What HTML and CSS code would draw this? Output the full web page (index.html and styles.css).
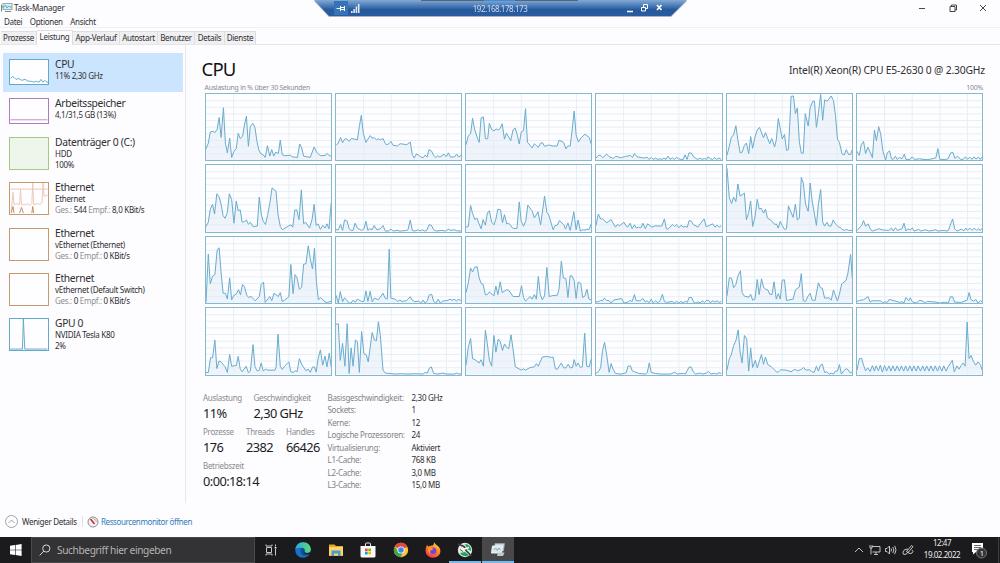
FILE: index.html
```html
<!DOCTYPE html>
<html lang="de">
<head>
    <meta charset="UTF-8">
    <meta name="viewport" content="width=device-width, initial-scale=1.0">
    <title>Task-Manager</title>
    <link rel="stylesheet" href="styles.css">
</head>
<body>
    <div class="window">
        <header class="titlebar">
            <svg class="app-icon" viewBox="0 0 12 11"><rect x="2" y="1.500" width="9" height="6" fill="#d9eef6" stroke="#8a979e" stroke-width=".8"/><path d="M1 5h2l1.500-2L6 6l1.500-2L9 5h2" fill="none" stroke="#3f9dbd" stroke-width=".8"/><path d="M.5 2.500v7M4 9.500h6" stroke="#6f8b7a" stroke-width="1"/></svg>
            <span class="title">Task-Manager</span>
            <div class="window-buttons">
                <svg viewBox="0 0 10 10"><path d="M2 5.500h6"/></svg>
                <svg viewBox="0 0 10 10"><path d="M2 3.500h5v5h-5zM3.500 3.500v-1.500h5v5h-1.500"/></svg>
                <svg viewBox="0 0 10 10"><path d="M2 2l6 6M8 2l-6 6"/></svg>
            </div>
        </header>
        <nav class="menu">
            <span>Datei</span>
            <span>Optionen</span>
            <span>Ansicht</span>
        </nav>
        <div class="tabs">
            <span class="tab tab-prozesse">Prozesse</span>
            <span class="tab tab-leistung active">Leistung</span>
            <span class="tab tab-verlauf">App-Verlauf</span>
            <span class="tab tab-autostart">Autostart</span>
            <span class="tab tab-benutzer">Benutzer</span>
            <span class="tab tab-details">Details</span>
            <span class="tab tab-dienste">Dienste</span>
        </div>

        <main class="content">
            <aside class="sidebar">
                <div class="item short selected">
                    <svg class="thumb blue" viewBox="0 0 40 26"><path d="M0 20l2-2 2 1 2 2 3-1 3 2 4-1 3 2 3 0 3 1 3-1 3 1 2-3 2 3 2-2 2 2 3 0"/></svg>
                    <div class="item-text"><h3>CPU</h3><p>11% 2,30 GHz</p></div>
                </div>
                <div class="item short">
                    <svg class="thumb purple" viewBox="0 0 40 26"><path d="M0 22.500h40"/></svg>
                    <div class="item-text"><h3>Arbeitsspeicher</h3><p>4,1/31,5 GB (13%)</p></div>
                </div>
                <div class="item">
                    <svg class="thumb green" viewBox="0 0 40 33"></svg>
                    <div class="item-text"><h3>Datenträger 0 (C:)</h3><p>HDD</p><p>100%</p></div>
                </div>
                <div class="item">
                    <svg class="thumb orange" viewBox="0 0 40 33"><path class="light" d="M0 6.500h40"/><path class="light" d="M1 30l2-20 1 13 4-1 2 1 1-16 1 16 4 0 3-1 2 2 2-2 1-22 1 23 5-1 2 1 2-3 1-20 1 14 4-1"/><path d="M1 32l2-7 1 7M10 32l2-6 2 6M23 32l1-7 1 7"/></svg>
                    <div class="item-text"><h3>Ethernet</h3><p>Ethernet</p><p><i>Ges.:</i> 544 <i>Empf.:</i> 8,0 KBit/s</p></div>
                </div>
                <div class="item">
                    <svg class="thumb orange" viewBox="0 0 40 33"></svg>
                    <div class="item-text"><h3>Ethernet</h3><p>vEthernet (Ethernet)</p><p><i>Ges.:</i> 0 <i>Empf.:</i> 0 KBit/s</p></div>
                </div>
                <div class="item">
                    <svg class="thumb orange" viewBox="0 0 40 33"></svg>
                    <div class="item-text"><h3>Ethernet</h3><p>vEthernet (Default Switch)</p><p><i>Ges.:</i> 0 <i>Empf.:</i> 0 KBit/s</p></div>
                </div>
                <div class="item">
                    <svg class="thumb blue" viewBox="0 0 40 33"><path d="M0 32h13l1-32 1.500 32h24"/></svg>
                    <div class="item-text"><h3>GPU 0</h3><p>NVIDIA Tesla K80</p><p>2%</p></div>
                </div>
            </aside>

            <section class="details">
                <div class="heading">
                    <h1>CPU</h1>
                    <span class="model">Intel(R) Xeon(R) CPU E5-2630 0 @ 2.30GHz</span>
                </div>
                <div class="caption">
                    <span>Auslastung in % über 30 Sekunden</span>
                    <span class="percent">100%</span>
                </div>
                <div class="cores" id="cores"></div>

                <div class="stats">
                    <div class="live">
                        <div class="live-row">
                            <div class="w50"><label>Auslastung</label><b>11%</b></div>
                            <div><label>Geschwindigkeit</label><b>2,30 GHz</b></div>
                        </div>
                        <div class="live-row">
                            <div class="w43"><label>Prozesse</label><b>176</b></div>
                            <div class="w40"><label>Threads</label><b>2382</b></div>
                            <div><label>Handles</label><b>66426</b></div>
                        </div>
                        <div class="live-row">
                            <div><label>Betriebszeit</label><b>0:00:18:14</b></div>
                        </div>
                    </div>
                    <dl class="facts">
                        <dt>Basisgeschwindigkeit:</dt><dd>2,30 GHz</dd>
                        <dt>Sockets:</dt><dd>1</dd>
                        <dt>Kerne:</dt><dd>12</dd>
                        <dt>Logische Prozessoren:</dt><dd>24</dd>
                        <dt>Virtualisierung:</dt><dd>Aktiviert</dd>
                        <dt>L1-Cache:</dt><dd>768 KB</dd>
                        <dt>L2-Cache:</dt><dd>3,0 MB</dd>
                        <dt>L3-Cache:</dt><dd>15,0 MB</dd>
                    </dl>
                </div>
            </section>
        </main>

        <footer class="statusbar">
            <svg class="less" viewBox="0 0 13 13"><circle cx="6.500" cy="6.500" r="6"/><path d="M3.500 8l3-3 3 3"/></svg>
            <span class="less-text">Weniger Details</span>
            <svg class="resmon" viewBox="0 0 12 12"><circle cx="6" cy="6" r="5" fill="#f4f2f3" stroke="#8b8b8f" stroke-width="1"/><path d="M3.500 3l4 5" stroke="#cf2f35" stroke-width="1.700"/><path d="M6 2.500q3 .5 3.500 3.500" fill="none" stroke="#999" stroke-width=".7"/></svg>
            <a class="resmon-link">Ressourcenmonitor öffnen</a>
        </footer>
    </div>

    <!-- remote desktop connection bar -->
    <div class="rdp">
        <div class="rdp-shape">
            <div class="rdp-strip"></div>
            <svg class="rdp-pin" viewBox="0 0 14 14"><path d="M2.500 7.500h4" stroke="#fff"/><path d="M6.500 5v5M7 6.500h3M7 8.500h3M10.500 5v5" stroke="#fff"/></svg>
            <svg class="rdp-signal" viewBox="0 0 9 9"><path d="M0 9v-2h1.600v2zM2.300 9v-4h1.600v4zM4.600 9v-6.500h1.600v6.500zM6.900 9v-9h1.600v9z" fill="#dfe9f4"/></svg>
            <span class="rdp-address">192.168.178.173</span>
            <svg class="rdp-buttons" viewBox="0 0 38 10"><path d="M1 8.500h6" stroke="#fff" stroke-width="1.600"/><path d="M15.500 4.500h4v3.500h-4zM17.500 4v-2.500h4v4h-2" fill="none" stroke="#fff"/><path d="M31 2l4.500 5M35.500 2l-4.500 5" stroke="#fff" stroke-width="1.600"/></svg>
        </div>
    </div>

    <div class="taskbar">
        <div class="start"><svg viewBox="0 0 12 12"><path d="M0 1.700l5-.7v4.700h-5zM5.600.9l6-.9v5.700h-6zM0 6.300h5v4.700l-5-.7zM5.600 6.300h6v5.700l-6-.9z" fill="#fff"/></svg></div>
        <div class="search">
            <svg viewBox="0 0 12 12"><circle cx="7.300" cy="4.500" r="3.600"/><path d="M4.700 7.200l-4 4.200"/></svg>
            <span>Suchbegriff hier eingeben</span>
        </div>
        <div class="apps">
            <div class="app"><svg viewBox="0 0 16 16"><path d="M3 2.500v1.500h6v-1.500M3 13.500v-1.500h6v1.500M3.500 5.500h5v5h-5zM12.500 2.500v2M12.500 7v6.500" fill="none" stroke="#c8c8c8" stroke-width="1"/><path d="M11.700 5h1.700v1.500h-1.700z" fill="#fff"/></svg></div>
            <div class="app"><svg viewBox="0 0 16 16">
                <defs><linearGradient id="edge" x1="0" y1="0" x2="1" y2="0"><stop offset="0" stop-color="#2aa7e4"/><stop offset="1" stop-color="#5cdb78"/></linearGradient></defs>
                <circle cx="8" cy="8" r="7.800" fill="#1671c8"/><path d="M.4 7.300C1 3 4 .2 8 .2c5 0 7.800 3.500 7.800 7 0 2.300-1.800 3.800-4 3.800-2 0-2.800-.8-2.300-1.700.8-1.500-.3-3.500-3-3.500-3 0-4.900.3-6.100 1.500z" fill="url(#edge)"/><path d="M5.500 8.500c0-1.500 1-2.500 2-2.500 1.500 0 2.500 1.500 2 2.800-.6 1.300.3 2.300 2.300 2.300 1.500 0 2.300-.3 3-.6-1 2-3 3.500-5 3.500-2.800 0-4.300-2.800-4.300-5.500z" fill="#14508e"/><path d="M9.500 8.800c-.6 1.300.3 2.300 2.300 2.300 1.500 0 2.500-.4 3.500-1.100l.7 1.500-2 1c-3 .2-5.500-1-5.500-3z" fill="#1f1e20"/></svg></div>
            <div class="app"><svg viewBox="0 0 16 16"><path d="M1 2.500h5.500l1.500 1.500h7v10h-14z" fill="#e6a82c"/><path d="M1 5h14v8.500h-14z" fill="#fbd667"/><path d="M3.500 14v-5.500h9v5.500h-2.500v-2.500h-4v2.500z" fill="#4a9ad4"/></svg></div>
            <div class="app"><svg viewBox="0 0 16 16"><path d="M5.500 4.500v-2.500q0-1 1-1h3q1 0 1 1v2.500" fill="none" stroke="#e8e8e8"/><path d="M.5 4h15v10q0 1.500-1.500 1.500h-12q-1.500 0-1.500-1.500z" fill="#f8f8f8"/><path d="M5 6.500h2.700v2.700H5z" fill="#f25022"/><path d="M8.300 6.500H11v2.700H8.300z" fill="#7fba00"/><path d="M5 9.800h2.700v2.700H5z" fill="#00a4ef"/><path d="M8.300 9.800H11v2.700H8.300z" fill="#ffb900"/></svg></div>
            <div class="app"><svg viewBox="0 0 16 16"><circle cx="8" cy="8" r="7.200" fill="#f9c83a"/><path d="M8 8L1.700 4.500A7.200 7.200 0 0 1 14.400 4.700z" fill="#dd4a3e"/><path d="M1.700 4.500A7.200 7.200 0 0 0 7.500 15.200L10 10 5 9.500z" fill="#3da452"/><circle cx="8" cy="8" r="3.600" fill="#fff"/><circle cx="8" cy="8" r="2.800" fill="#4285e8"/></svg></div>
            <div class="app"><svg viewBox="0 0 16 16">
                <defs><linearGradient id="fox" x1=".8" y1="0" x2=".2" y2="1"><stop offset="0" stop-color="#ffdc3e"/><stop offset=".5" stop-color="#fd7b27"/><stop offset="1" stop-color="#ee2f62"/></linearGradient></defs>
                <path d="M2 3l1.500 1.500C5 3.500 6.500 3.500 8 3.500L9.500.3c.5 2 2 2.500 3 3.500 1.700 1.300 2.900 3 2.900 5.200 0 4-3.300 6.700-7.400 6.700S.6 12.800.6 9C.6 6.500 1 5 2 3z" fill="url(#fox)"/><circle cx="8" cy="8.800" r="3.300" fill="#7a43d3"/><path d="M3.500 5.500c2-.5 3 .5 5 1.500-1 1-2.500.7-3.200 2-.5 1-.1 2 .7 3-2.500-.7-3.800-3.500-2.500-6.500z" fill="#ff9a2a"/></svg></div>
            <div class="app running"><svg viewBox="0 0 16 16"><circle cx="8" cy="8" r="7.200" fill="#dfe9df"/><path d="M8 2a6 6 0 0 1 6 7l-4-2zM3 11l5-1 4 3a6 6 0 0 1-9-2z" fill="#25a25a"/><path d="M1 2l6 2.500L9.500 9l5 5" fill="none" stroke="#3b3f3e" stroke-width="1.600"/><path d="M3 8.500l9-3" stroke="#fff" stroke-width="1.700"/><path d="M3 7.500l3 2" stroke="#55615a"/></svg></div>
            <div class="app running current"><svg viewBox="0 0 16 16"><path d="M5 1.500h9.500l-1 7.500h-9z" fill="#cfd6da" stroke="#9aa3a8" stroke-width=".7"/><path d="M2.500 4h10l-1 7h-10z" fill="#dbe5ea" stroke="#f2f5f6"/><path d="M4 8l1.700-2 1.600 2.500 1.700-2.500 1.500 2" fill="none" stroke="#5aa5c8" stroke-width=".8"/><path d="M8 10.500h6.500l-1.500 3.500h-6z" fill="#c4c8ca"/></svg></div>
        </div>
        <div class="tray">
            <svg class="tray-icon chevron" viewBox="0 0 12 12"><path d="M2 8l4-4 4 4"/></svg>
            <svg class="tray-icon" viewBox="0 0 12 12"><path d="M3 2.500h8v5.500h-7.500M1 1v3h2v-3M2 4v6.500M5 10.500h4M7 8v2"/></svg>
            <svg class="tray-icon" viewBox="0 0 12 12"><path d="M.5 4.500h1.500l2.500-2.500v8l-2.500-2.500h-1.500z"/><path d="M6 4.500q1 1.500 0 3M7.800 3q2 3 0 6M9.700 1.800q2.600 4.200 0 8.400"/></svg>
            <svg class="tray-icon pen" viewBox="0 0 12 12"><path d="M4.500 7.500l5-6 1.500 1.200-5 6zM6 5q-4.500 0-5 3t2 2.500 3-3M6 8.500q2 2 4 .5t0-3"/></svg>
            <div class="clock"><span>12:47</span><span class="date">19.02.2022</span></div>
            <svg class="notify" viewBox="0 0 18 18"><path d="M2 2h11v9h-7l-3 2.500v-2.500h-1z" fill="#fff"/><path d="M4 4.500h7M4 6.500h7M4 8.500h5" stroke="#444" stroke-width=".8"/><circle cx="11.500" cy="12" r="5" fill="#343437" stroke="#77777a"/><text x="9.800" y="14.800">1</text></svg>
        </div>
    </div>
    <script src="cores.js"></script>
</body>
</html>
```

FILE: styles.css
```css
* {
    box-sizing: border-box;
}
body {
    margin: 0;
    width: 1000px;
    height: 563px;
    overflow: hidden;
    position: relative;
    font-family: "Noto Sans", "Open Sans", sans-serif;
    font-size: 8px;
    letter-spacing: -0.3px;
    color: #2f2f32;
    background-color: #fdfcfe;
}
h1, h3, p, dl, dd {
    margin: 0;
    font-weight: normal;
}
svg {
    display: block;
    flex: none;
}
.window {
    height: 537px;
    display: flex;
    flex-direction: column;
}

/* title, menu, tabs */
.titlebar {
    height: 15px;
    display: flex;
    align-items: center;
    padding-left: 1px;
}
.app-icon {
    width: 12px;
    height: 11px;
    margin-right: 1px;
}
.title {
    letter-spacing: -0.2px;
}
.window-buttons {
    margin-left: auto;
    display: flex;
    gap: 20.5px;
    padding-right: 12px;
}
.window-buttons svg {
    width: 10px;
    height: 10px;
    fill: none;
    stroke: #333;
    stroke-width: 0.9;
}
.menu {
    height: 13px;
    display: flex;
    align-items: center;
    gap: 7.5px;
    padding-left: 4px;
    border-bottom: 1px solid #f0eff1;
}
.tabs {
    height: 17px;
    display: flex;
    align-items: flex-end;
    padding-left: 1px;
    border-bottom: 1px solid #e6e5e7;
}
.tab {
    height: 13px;
    line-height: 12px;
    text-align: center;
    white-space: nowrap;
    background-color: #f0eff1;
    border: 1px solid #dedde0;
    border-left: none;
    border-bottom: none;
}
.tab.active {
    height: 15px;
    margin-bottom: -1px;
    background-color: #fdfcfe;
}
.tab-prozesse { width: 36px; }
.tab-leistung { width: 36px; }
.tab-verlauf { width: 47px; }
.tab-autostart { width: 38px; }
.tab-benutzer { width: 37px; }
.tab-details { width: 30px; }
.tab-dienste { width: 31px; }

.content {
    flex: 1;
    display: flex;
    min-height: 0;
}

/* sidebar */
.sidebar {
    width: 186px;
    margin-bottom: 3px;
    padding: 8px 2px 0 3px;
    border-right: 1px solid #e8e7ea;
}
.item {
    height: 45.3px;
    display: flex;
    padding: 6px 0 0 6px;
}
.item.short {
    height: 39px;
}
.item.selected {
    background-color: #cce5fe;
}
.thumb {
    width: 40px;
    height: 33px;
    border: 1px solid;
    background-color: #fefdff;
    fill: none;
    stroke-width: 1;
}
.short .thumb {
    height: 26px;
}
.blue { border-color: #66a8c8; stroke: #5fa6c9; }
.purple { border-color: #b07cbc; stroke: #b98cc4; }
.green { border-color: #a3cb80; background-color: #eef5ea; }
.orange { border-color: #c79a6c; stroke: #c58a5c; }
.thumb .light { stroke: #eac8b8; }
.item-text {
    padding-left: 6px;
}
.item-text h3 {
    font-size: 10.3px;
    letter-spacing: -0.33px;
    line-height: 12px;
    margin-top: -1px;
    white-space: nowrap;
}
.item-text p {
    line-height: 11px;
    white-space: nowrap;
}
.item-text i {
    font-style: normal;
    color: #909094;
}

/* CPU details */
.details {
    flex: 1;
    padding: 12px 17px 0 18.5px;
}
.heading {
    height: 26px;
    display: flex;
    justify-content: space-between;
}
.heading h1 {
    margin-left: -3px;
    font-size: 18.5px;
    letter-spacing: -0.8px;
    line-height: 23px;
    color: #111;
}
.model {
    margin: 5px -2px 0 0;
    font-size: 10.3px;
    letter-spacing: -0.15px;
    line-height: 17px;
}
.caption {
    height: 10px;
    display: flex;
    justify-content: space-between;
    line-height: 10px;
    font-size: 6.9px;
    letter-spacing: -0.21px;
    color: #8b8b8f;
}
.cores {
    height: 282.500px;
    display: grid;
    grid-template-columns: repeat(6, 1fr);
    grid-template-rows: repeat(4, 1fr);
    gap: 3px;
}
.core {
    width: 100%;
    height: 100%;
    border: 1px solid #86b8d0;
    background-color: #fefdff;
}
.core .grid {
    fill: none;
    stroke: #e6f0f4;
    stroke-width: 1;
    vector-effect: non-scaling-stroke;
}
.core .area {
    fill: #e4ecf7;
    fill-opacity: 0.6;
}
.core .line {
    fill: none;
    stroke: #6aaccd;
    stroke-width: 1;
    vector-effect: non-scaling-stroke;
}
.stats {
    display: flex;
    padding-top: 16px;
}
.live {
    width: 124.500px;
    margin-left: -1.500px;
}
.live-row {
    height: 34px;
    display: flex;
}
.live label {
    display: block;
    line-height: 12px;
    color: #8b8b8f;
}
.live b {
    display: block;
    font-weight: normal;
    font-size: 12.8px;
    letter-spacing: -0.55px;
    line-height: 18px;
    color: #1b1b1d;
}
.w50 { width: 50.5px; }
.w43 { width: 43px; }
.w40 { width: 40px; }
.facts {
    display: grid;
    grid-template-columns: 84px auto;
    grid-auto-rows: 12.5px;
    line-height: 12px;
    white-space: nowrap;
}
.facts dt {
    color: #838387;
}

.statusbar {
    height: 31px;
    display: flex;
    align-items: center;
    padding-left: 5px;
}
.less {
    width: 13px;
    height: 13px;
    fill: none;
    stroke: #9a9a9e;
    stroke-width: 0.9;
}
.less-text {
    width: 61px;
    margin-left: 4px;
    border-right: 1px solid #e3e2e5;
}
.resmon {
    width: 12px;
    height: 12px;
    margin: 0 2px 0 4px;
}
.resmon-link {
    letter-spacing: -0.4px;
    color: #2f7cbc;
}

/* remote desktop bar */
.rdp {
    position: absolute;
    top: 0;
    left: 314px;
    width: 373px;
    height: 18px;
    filter: drop-shadow(0 1px 0 #aab4c2);
}
.rdp-shape {
    height: 16px;
    display: flex;
    align-items: center;
    background: linear-gradient(#83aad4, #3c6faf 45%, #275a9d 60%, #2a5c9e);
    clip-path: polygon(0 0, 100% 0, 357px 100%, 15px 100%);
}
.rdp-strip {
    position: absolute;
    top: 0;
    left: 107px;
    width: 157px;
    height: 1px;
    background: linear-gradient(90deg, #56657c 40%, #3e8ddb 40%, #3e8ddb 60%, #56657c 60%);
}
.rdp-pin {
    width: 14px;
    height: 14px;
    margin-left: 20px;
    background-color: #3673b9;
}
.rdp-signal {
    width: 9px;
    height: 9px;
    margin-left: 3px;
}
.rdp-address {
    width: 110px;
    margin-left: 85px;
    text-align: center;
    letter-spacing: -0.45px;
    color: #cfddec;
}
.rdp-buttons {
    width: 38px;
    height: 10px;
    margin-left: 71px;
}

/* taskbar */
.taskbar {
    height: 26px;
    display: flex;
    color: #eee;
    background-color: #1b1a1c;
}
.start {
    width: 31px;
    padding: 7px 0 0 10px;
}
.start svg {
    width: 12px;
    height: 12px;
}
.search {
    width: 224px;
    display: flex;
    align-items: center;
    padding-left: 7px;
    border: 1px solid #4a494b;
    background-color: #333234;
    color: #b4b4b6;
    font-size: 10.2px;
    letter-spacing: -0.4px;
}
.search svg {
    width: 12px;
    height: 12px;
    margin-right: 6px;
    fill: none;
    stroke: #d8d8d8;
    stroke-width: 1;
}
.apps {
    display: flex;
    gap: 0.4px;
}
.app {
    width: 32px;
    padding: 5px 8px 0;
    border-bottom: 2px solid transparent;
}
.app svg {
    width: 16px;
    height: 16px;
}
.app.running {
    border-bottom-color: #76b9ed;
}
.app.current {
    background-color: #48484a;
}
.tray {
    margin-left: auto;
    display: flex;
    align-items: center;
    margin-right: 1px;
    padding-right: 10px;
    border-right: 1px solid #3d3c3e;
}
.tray-icon {
    width: 12px;
    height: 12px;
    margin-right: 4px;
    fill: none;
    stroke: #d4d4d4;
    stroke-width: 0.9;
}
.tray-icon.pen {
    margin: 0 3px 0 1px;
}
.clock {
    width: 50px;
    margin-top: -2px;
    text-align: center;
    line-height: 12px;
    letter-spacing: -0.45px;
}
.clock span {
    display: block;
}
.notify {
    width: 18px;
    height: 18px;
    margin-left: 3px;
}
.notify text {
    font-size: 7.5px;
    fill: #fff;
}
```

FILE: cores.js
```javascript
// one polyline per logical processor, 381 x 203 units, y pointing down
var cores = [
    '0,168 7,150 13,116 21,114 27,118 34,108 40,72 46,133 53,42 59,150 65,180 72,135 78,194 85,175 92,167 98,120 104,136 111,130 117,95 123,68 129,160 135,98 143,90 149,103 155,145 161,172 167,183 174,186 180,194 187,158 194,190 200,170 206,190 212,178 220,182 226,141 232,186 241,189 256,187 262,192 278,194 285,153 291,165 297,190 317,194 329,162 336,177 348,189 362,188 369,182 376,190 381,189',
    '0,157 7,150 14,133 20,149 26,138 33,137 40,145 47,136 65,140 71,100 77,65 83,120 91,148 104,127 110,135 117,134 123,140 129,137 136,140 143,136 150,152 155,155 161,152 167,145 174,157 187,159 195,152 215,155 226,147 232,185 238,196 245,183 257,192 265,195 271,187 277,193 283,170 291,175 297,188 304,194 310,189 316,193 329,184 335,192 342,180 348,193 361,192 367,184 373,193 381,187',
    '0,155 7,128 14,122 20,74 26,108 33,130 40,148 46,73 53,70 59,137 66,137 71,90 78,108 85,113 92,107 98,110 104,105 110,91 117,138 123,120 129,130 136,143 143,110 150,104 156,125 162,153 168,116 175,112 181,45 187,148 194,156 201,165 208,152 214,158 220,163 227,150 233,149 239,160 251,156 264,159 277,159 283,141 297,148 304,168 310,159 317,159 323,110 329,52 335,125 342,147 349,135 362,123 375,133 381,153',
    '0,196 7,188 13,187 20,195 33,184 40,192 53,197 60,190 75,195 90,191 105,188 111,194 117,182 125,192 147,196 155,193 161,200 168,194 174,200 181,196 188,200 194,198 200,200 207,196 213,200 219,190 226,200 232,195 238,200 245,194 252,198 258,200 265,200 271,186 277,200 283,180 290,181 297,192 304,197 310,200 317,196 323,200 330,197 336,200 341,192 348,198 355,200 361,194 367,200 374,196 381,200',
    '0,187 7,160 13,133 20,125 27,97 33,140 40,180 46,178 53,157 59,150 66,182 72,130 78,166 85,132 92,110 99,102 111,134 117,118 130,152 136,136 145,162 150,140 156,75 168,137 175,124 181,172 187,170 195,7 202,6 208,60 214,43 220,145 226,181 232,181 238,60 247,98 253,42 261,22 266,22 272,102 278,60 285,1 291,80 297,18 305,22 317,6 324,20 330,65 336,138 342,148 350,183 357,186 363,170 370,185 376,185 381,170',
    '0,175 7,188 13,155 20,145 26,182 33,163 40,178 47,195 53,110 59,143 66,100 72,122 79,175 87,202 92,180 99,174 105,198 110,200 117,190 122,200 129,194 137,198 144,184 149,200 161,200 168,192 175,200 190,198 210,201 225,199 240,195 246,167 252,200 270,200 277,198 285,180 292,179 298,197 306,190 315,200 323,200 330,192 336,200 343,193 350,200 356,192 362,199 369,193 375,200 381,192',

    '0,188 7,175 13,135 20,120 26,150 33,88 40,98 46,120 52,155 58,163 65,145 71,88 78,105 85,178 92,110 98,140 104,137 110,175 117,173 123,168 129,181 135,175 143,188 156,187 162,98 168,150 174,172 181,182 187,155 194,118 201,70 213,80 219,150 226,188 232,198 245,190 258,183 264,190 270,138 276,137 283,167 290,76 297,180 303,175 315,193 323,165 329,120 335,185 341,180 348,197 355,185 362,193 368,180 374,195 381,115',
    '0,198 7,198 14,182 20,200 26,168 34,172 40,195 46,200 52,200 58,178 65,193 78,200 85,195 91,172 97,200 103,195 110,198 116,185 124,198 135,195 143,185 150,202 160,202 167,196 175,202 185,200 195,202 215,200 219,198 226,168 232,200 240,202 250,198 256,202 262,198 270,202 276,200 283,183 290,184 297,198 305,202 320,200 335,202 341,196 350,200 360,198 367,201 381,202',
    '0,190 7,188 14,124 20,148 27,167 33,162 39,178 46,195 52,167 59,184 65,147 71,140 78,175 85,183 91,165 97,135 105,137 111,177 117,152 124,180 130,178 143,194 155,194 162,113 168,172 175,187 182,170 188,123 201,140 208,162 219,143 227,183 239,95 246,145 252,153 265,198 271,185 278,184 284,170 297,182 303,196 310,177 317,200 328,143 335,198 341,168 348,202 355,198 362,199 368,196 374,198 381,180',
    '0,185 7,150 14,165 20,165 33,177 46,167 59,190 65,182 72,186 85,175 92,187 97,190 104,178 110,195 117,183 123,193 129,190 137,192 143,178 150,195 157,180 170,190 180,186 200,187 208,165 214,195 220,195 233,182 239,188 245,182 252,192 259,184 265,190 272,188 278,190 283,170 290,172 297,183 304,186 310,190 317,180 329,165 335,188 342,186 355,180 362,190 368,184 375,190 381,185',
    '0,10 7,100 14,118 20,98 27,112 33,58 40,95 53,86 59,168 66,145 72,110 78,188 85,160 92,105 98,135 104,132 111,147 117,135 123,162 135,170 145,182 150,180 156,193 162,172 168,185 175,197 181,195 187,125 201,160 208,120 214,168 220,163 226,38 232,55 239,120 247,142 253,55 259,110 266,150 272,185 278,120 285,75 291,175 297,187 304,175 310,187 317,186 323,168 330,180 340,190 343,190 350,197 357,200 364,197 370,200 381,200',
    '0,200 14,185 20,170 26,187 34,180 40,195 46,202 59,198 66,195 80,199 97,200 105,193 110,202 117,192 123,200 137,195 143,178 149,202 155,195 162,199 168,192 174,202 187,197 195,202 207,198 220,202 240,198 246,202 265,200 272,202 278,200 285,180 291,165 297,195 304,202 318,196 324,202 331,193 336,200 343,193 350,200 357,193 364,200 370,195 375,200 381,193',

    '0,200 7,52 13,143 20,120 27,115 34,40 40,33 46,110 52,172 59,172 65,190 72,125 78,192 85,178 92,175 99,161 105,177 111,145 117,152 124,178 130,185 137,182 150,195 162,182 168,145 175,138 180,200 194,182 200,195 207,172 220,182 226,170 232,197 239,193 252,183 258,84 265,173 271,115 277,125 284,160 291,153 297,83 304,82 311,27 317,65 324,98 330,34 336,140 342,192 349,185 362,199 370,200 381,196',
    '0,178 7,202 13,167 20,198 26,186 33,193 40,202 46,202 52,193 59,199 65,190 78,197 85,197 91,165 97,197 104,166 110,198 117,187 129,192 143,172 150,188 156,190 162,37 167,187 180,190 188,197 194,193 201,197 214,195 226,183 232,193 240,198 252,196 258,202 265,193 271,202 278,195 283,178 291,175 297,197 304,202 311,190 317,202 325,196 340,194 347,190 353,194 359,190 366,196 372,191 381,194',
    '0,170 7,140 14,95 20,107 27,92 34,91 40,125 46,142 52,145 59,177 65,176 71,168 85,180 91,150 97,176 104,137 110,170 124,161 130,163 143,182 162,182 169,149 175,185 181,196 195,182 201,190 208,176 214,190 220,121 226,175 232,192 239,180 246,93 253,182 265,179 278,178 283,160 290,74 296,125 304,127 310,185 317,118 323,120 329,133 335,188 341,138 349,142 355,185 362,180 368,160 374,190 381,192',
    '0,198 7,198 14,194 20,195 25,187 33,194 40,195 46,202 53,193 78,188 85,202 97,199 104,194 110,197 117,176 122,195 135,195 143,188 150,199 155,195 162,201 168,190 174,202 181,195 188,201 195,195 202,175 208,197 215,200 232,197 239,202 245,196 252,202 258,197 265,201 272,196 278,200 283,185 291,185 297,199 304,202 311,198 317,202 323,195 330,200 335,195 342,193 348,201 355,195 362,199 368,195 375,200 381,197',
    '0,180 7,125 14,126 20,155 27,145 33,120 41,103 46,170 53,181 67,184 72,175 78,193 85,190 92,130 98,176 105,128 111,153 117,160 124,162 130,175 137,176 143,137 150,190 156,173 162,190 168,132 175,131 181,194 201,190 208,162 220,153 226,112 232,195 239,197 247,180 253,172 259,193 268,194 278,140 284,155 290,157 297,187 310,186 317,193 324,162 330,180 336,196 342,175 349,143 362,133 368,110 376,53 381,125',
    '0,197 7,194 20,192 27,187 33,182 40,199 46,195 72,195 78,201 85,198 92,200 98,191 117,196 130,200 137,198 143,201 149,185 157,195 162,186 168,198 181,202 188,195 195,194 208,201 214,197 240,199 253,202 265,199 278,202 284,183 291,183 297,199 317,200 335,193 341,170 347,192 355,196 362,191 368,202 375,195 381,198',

    '0,197 7,197 14,152 20,152 27,98 33,185 40,162 46,165 58,180 65,197 72,142 78,178 92,176 98,148 104,186 110,195 122,178 129,198 135,193 143,112 149,180 156,193 162,190 168,168 174,193 181,187 187,190 210,190 213,182 219,80 226,178 232,188 239,178 252,165 258,195 265,197 272,192 277,195 284,155 291,172 304,192 311,187 317,197 324,181 330,180 335,196 341,155 348,128 355,175 362,147 368,180 375,138 381,180',
    '0,50 7,48 13,160 20,108 27,178 34,48 40,200 46,122 52,178 59,98 65,103 71,197 78,72 85,140 92,143 98,165 104,120 110,75 117,98 123,100 129,42 135,85 143,190 150,199 180,202 200,201 216,202 240,201 265,202 271,197 278,199 283,185 290,180 297,200 310,202 325,199 335,202 360,202 367,199 373,202 381,201',
    '0,175 7,120 14,93 20,155 27,158 40,168 46,158 53,178 59,68 65,110 71,160 78,178 85,84 91,135 98,95 104,102 111,130 117,110 123,120 130,124 137,82 143,125 150,180 168,190 175,186 181,190 195,182 208,180 214,170 220,178 232,150 246,148 259,151 265,150 272,186 278,187 290,168 297,183 304,183 311,172 317,183 324,182 329,158 335,178 341,168 348,182 354,180 361,77 367,178 375,180 381,155',
    '0,200 7,195 14,183 20,130 26,105 32,140 40,197 46,170 52,187 59,200 65,201 78,202 92,198 97,178 105,177 110,192 117,195 130,200 150,202 156,198 162,168 168,197 180,200 195,202 227,202 240,196 246,202 265,200 272,202 278,190 284,180 290,181 297,197 303,202 317,199 324,202 336,199 342,194 350,202 360,200 367,202 374,198 381,200',
    '0,190 7,155 13,143 20,115 27,100 34,67 40,135 46,168 53,84 60,95 66,193 72,122 78,182 86,160 92,183 105,142 111,172 117,150 124,173 135,180 150,195 156,196 163,189 180,190 195,195 202,190 208,188 214,192 226,188 233,182 240,190 252,189 258,195 265,197 272,178 278,193 284,175 290,172 297,197 304,195 311,202 317,199 324,202 330,193 336,193 342,173 348,202 357,190 362,186 368,188 374,198 381,195',
    '0,190 7,155 14,154 20,175 26,192 33,183 40,194 47,176 53,193 58,177 65,192 71,175 77,196 84,176 90,193 97,177 103,193 109,177 116,193 122,177 129,193 135,177 142,193 148,177 154,193 161,177 167,193 173,177 180,193 186,177 193,193 200,177 206,193 212,177 219,193 225,177 232,193 238,177 245,193 251,177 258,193 264,177 271,193 277,180 290,160 296,195 304,177 310,187 317,176 323,168 329,178 335,43 341,155 347,145 354,163 361,175 368,165 375,173 381,190'
];

// grid: a line every 10 % and four time marks
var grid = '';
for (var i = 1; i < 10; i++) {
    grid += 'M0 ' + (i * 20.3) + 'H381';
}
for (var j = 1; j < 5; j++) {
    grid += 'M' + (j * 84) + ' 0V203';
}

document.getElementById('cores').innerHTML = cores.map(function(points) {
    return '<svg class="core" viewBox="0 0 381 203" preserveAspectRatio="none">' +
        '<path class="grid" d="' + grid + '"/>' +
        '<polygon class="area" points="0,203 ' + points + ' 381,203"/>' +
        '<polyline class="line" points="' + points + '"/></svg>';
}).join('');
```
